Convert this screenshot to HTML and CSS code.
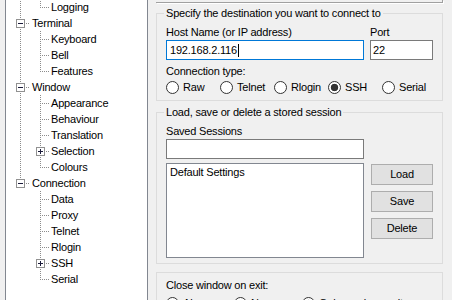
FILE: index.html
```html
<!DOCTYPE html>
<html>
<head>
<meta charset="utf-8">
<title>PuTTY Configuration</title>
<link rel="stylesheet" href="styles.css">
</head>
<body>
<div class="win">
  <div class="tree">
    <ul class="tree-list">
      <li class="row child"><span class="c v"></span><span class="c th"></span><span class="lbl">Logging</span></li>
      <li class="row"><span class="c vh"><span class="bx minus"></span></span><span class="lbl">Terminal</span></li>
      <li class="row child"><span class="c v"></span><span class="c vh"></span><span class="lbl">Keyboard</span></li>
      <li class="row child"><span class="c v"></span><span class="c vh"></span><span class="lbl">Bell</span></li>
      <li class="row child"><span class="c v"></span><span class="c th"></span><span class="lbl">Features</span></li>
      <li class="row"><span class="c vh"><span class="bx minus"></span></span><span class="lbl">Window</span></li>
      <li class="row child"><span class="c v"></span><span class="c vh"></span><span class="lbl">Appearance</span></li>
      <li class="row child"><span class="c v"></span><span class="c vh"></span><span class="lbl">Behaviour</span></li>
      <li class="row child"><span class="c v"></span><span class="c vh"></span><span class="lbl">Translation</span></li>
      <li class="row child"><span class="c v"></span><span class="c vh"><span class="bx plus"></span></span><span class="lbl">Selection</span></li>
      <li class="row child"><span class="c v"></span><span class="c th"></span><span class="lbl">Colours</span></li>
      <li class="row"><span class="c th"><span class="bx minus"></span></span><span class="lbl">Connection</span></li>
      <li class="row child"><span class="c"></span><span class="c vh"></span><span class="lbl">Data</span></li>
      <li class="row child"><span class="c"></span><span class="c vh"></span><span class="lbl">Proxy</span></li>
      <li class="row child"><span class="c"></span><span class="c vh"></span><span class="lbl">Telnet</span></li>
      <li class="row child"><span class="c"></span><span class="c vh"></span><span class="lbl">Rlogin</span></li>
      <li class="row child"><span class="c"></span><span class="c vh"><span class="bx plus"></span></span><span class="lbl">SSH</span></li>
      <li class="row child"><span class="c"></span><span class="c th"></span><span class="lbl">Serial</span></li>
    </ul>
  </div>

  <div class="panel">
    <div class="title-box"></div>

    <fieldset class="grp g1">
      <legend>Specify the destination you want to connect to</legend>
      <div class="host-row">
        <div class="host">
          <span class="lab">Host Name (or IP address)</span>
          <div class="input focus"><span>192.168.2.116</span><span class="caret"></span></div>
        </div>
        <div class="port">
          <span class="lab">Port</span>
          <div class="input port-in">22</div>
        </div>
      </div>
      <span class="lab sec">Connection type:</span>
      <div class="radios r5">
        <span class="radio"><span class="dot"></span>Raw</span>
        <span class="radio"><span class="dot"></span>Telnet</span>
        <span class="radio"><span class="dot"></span>Rlogin</span>
        <span class="radio"><span class="dot on"></span>SSH</span>
        <span class="radio"><span class="dot"></span>Serial</span>
      </div>
    </fieldset>

    <fieldset class="grp g2">
      <legend>Load, save or delete a stored session</legend>
      <span class="lab">Saved Sessions</span>
      <div class="sess">
        <div class="input"></div>
        <div class="list">Default Settings</div>
        <div class="btns">
          <div class="btn">Load</div>
          <div class="btn">Save</div>
          <div class="btn">Delete</div>
        </div>
      </div>
    </fieldset>

    <div class="grp g3">
      <span class="lab">Close window on exit:</span>
      <div class="radios r3">
        <span class="radio"><span class="dot"></span>Always</span>
        <span class="radio"><span class="dot"></span>Never</span>
        <span class="radio"><span class="dot on"></span>Only on clean exit</span>
      </div>
    </div>
  </div>
</div>
</body>
</html>
```

FILE: styles.css
```css
* { box-sizing: border-box; }
html, body { margin: 0; padding: 0; }
body {
  width: 452px;
  height: 300px;
  overflow: hidden;
  background: #f0f0f0;
  font-family: "Liberation Sans", Arial, sans-serif;
  font-size: 11px;
  line-height: 16px;
  letter-spacing: -0.2px;
  color: #000;
}

.win {
  display: flex;
  align-items: flex-start;
  height: 300px;
}

/* ---------- tree ---------- */
.tree {
  flex: none;
  margin-left: 5px;
  width: 143px;
  height: 310px;
  background: #fff;
  border: 1px solid #828790;
  border-top: none;
  overflow: hidden;
}
.tree-list {
  list-style: none;
  margin: -1px 0 0;
  padding: 0 0 0 4px;
}
.row {
  display: flex;
  height: 16px;
}
.c {
  flex: none;
  display: block;
  width: 20px;
  height: 16px;
}
.lbl {
  padding-left: 2px;
  white-space: nowrap;
}
.child .lbl { padding-left: 1px; }

.v {
  background: repeating-linear-gradient(to bottom, #8c8c8c 0 1px, transparent 1px 2px) 10px 0 / 1px 16px no-repeat;
}
.vh {
  background:
    repeating-linear-gradient(to bottom, #8c8c8c 0 1px, transparent 1px 2px) 10px 0 / 1px 16px no-repeat,
    repeating-linear-gradient(to right, #8c8c8c 0 1px, transparent 1px 2px) 10px 8px / 10px 1px no-repeat;
}
.th {
  background:
    repeating-linear-gradient(to bottom, #8c8c8c 0 1px, transparent 1px 2px) 10px 0 / 1px 9px no-repeat,
    repeating-linear-gradient(to right, #8c8c8c 0 1px, transparent 1px 2px) 10px 8px / 10px 1px no-repeat;
}

.bx {
  display: block;
  position: relative;
  width: 9px;
  height: 9px;
  margin: 4px 0 0 6px;
  border: 1px solid #919191;
  background: #fff;
}
.bx::before {
  content: "";
  position: absolute;
  left: 1px;
  top: 3px;
  width: 5px;
  height: 1px;
  background: #1a1a3a;
}
.bx.plus::after {
  content: "";
  position: absolute;
  left: 3px;
  top: 1px;
  width: 1px;
  height: 5px;
  background: #1a1a3a;
}

/* ---------- right panel ---------- */
.panel {
  flex: none;
  margin-left: 8px;
  width: 287px;
  display: flex;
  flex-direction: column;
}
.title-box {
  height: 3px;
  border-right: 1px solid #a0a0a0;
  border-bottom: 1px solid #a0a0a0;
  box-shadow: 1px 1px 0 #fff;
}

.grp {
  margin: 0;
  min-width: 0;
  padding: 3px 9px 6px;
  border: 1px solid #dcdcdc;
}
.grp legend {
  padding: 0 2px;
  margin-left: -2px;
  line-height: 16px;
  white-space: nowrap;
}
.g1 { margin-top: 2px; }
.g2 { margin-top: 3px; padding-bottom: 5px; }
.g3 { margin-top: 8px; padding-top: 4px; height: 40px; }

.lab {
  display: block;
  height: 16px;
  white-space: nowrap;
}
.sec { margin-top: 3px; }

.host-row {
  display: flex;
  gap: 6px;
}
.host { width: 198px; }
.port { width: 63px; }

.input {
  display: flex;
  align-items: center;
  height: 20px;
  padding: 0 3px;
  border: 1px solid #7a7a7a;
  background: #fff;
  white-space: nowrap;
}
.input.focus { border-color: #0078d7; }
.port-in { padding-left: 2px; }
.caret {
  display: block;
  width: 1px;
  height: 13px;
  margin-left: 1px;
  background: #000;
}

.radios {
  display: grid;
  height: 15px;
}
.r5 { grid-template-columns: repeat(5, 54px); }
.r3 { grid-template-columns: 68px 68px auto; margin-top: 2px; }
.radio {
  display: flex;
  align-items: center;
  gap: 4px;
  white-space: nowrap;
}
.dot {
  flex: none;
  width: 13px;
  height: 13px;
  border-radius: 50%;
  border: 1px solid #333;
  background: #fff;
}
.dot.on {
  background: radial-gradient(circle, #333 0 3.4px, #fff 4.1px);
}

.sess {
  display: grid;
  grid-template-columns: 198px 62px;
  column-gap: 7px;
}
.sess .input { grid-column: 1; }
.list {
  grid-column: 1;
  margin-top: 4px;
  height: 95px;
  padding: 0 3px;
  border: 1px solid #828790;
  background: #fff;
  white-space: nowrap;
}
.btns {
  grid-column: 2;
  margin-top: 5px;
  display: flex;
  flex-direction: column;
  gap: 6px;
}
.btn {
  height: 21px;
  line-height: 19px;
  text-align: center;
  border: 1px solid #adadad;
  background: #e1e1e1;
}
```
